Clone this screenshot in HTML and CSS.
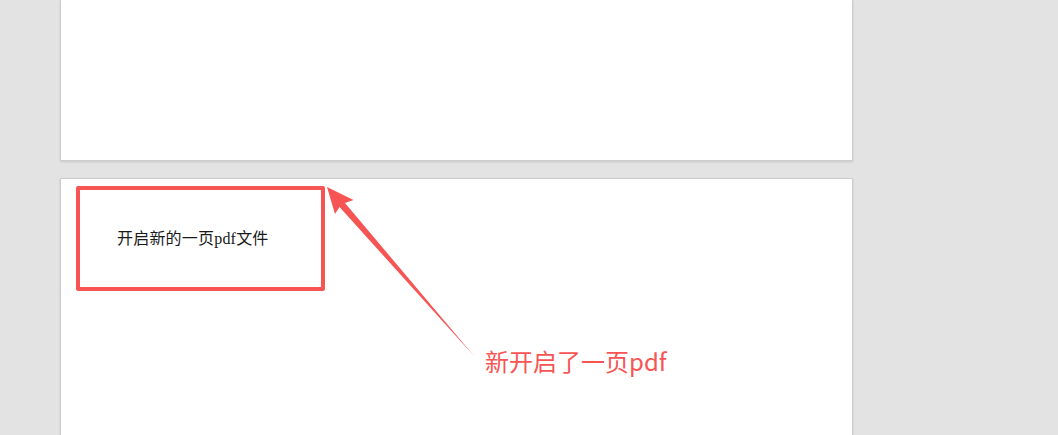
FILE: index.html
```html
<!DOCTYPE html>
<html lang="zh">
<head>
<meta charset="utf-8">
<title>PDF 新页</title>
<link rel="stylesheet" href="styles.css">
</head>
<body>
<div class="stage">
  <div class="pages">
    <div class="page page-first"></div>
    <div class="page page-second">
      <p class="doc-text">开启新的一页pdf文件</p>
    </div>
  </div>
  <div class="mark-box"></div>
  <svg class="arrow" width="1058" height="435" viewBox="0 0 1058 435">
    <polygon points="327,187 353.5,200 345,203 474,356 339.5,207 335,214" fill="#f75454"/>
  </svg>
  <div class="mark-label">新开启了一页pdf</div>
</div>
</body>
</html>
```
FILE: styles.css
```css
html, body {
  margin: 0;
  padding: 0;
  width: 1058px;
  height: 435px;
  overflow: hidden;
  background: #e3e3e3;
}
.stage {
  position: relative;
  width: 1058px;
  height: 435px;
  overflow: hidden;
}
.pages {
  display: flex;
  flex-direction: column;
  gap: 17px;
  padding-left: 60px;
}
.page {
  box-sizing: border-box;
  width: 793px;
  background: #ffffff;
  border: 1px solid #cdcdcd;
  box-shadow: 0 1px 2px rgba(0, 0, 0, 0.12);
}
.page-first {
  height: 161px;
  border-top: none;
}
.page-second {
  height: 400px;
  padding: 50px 0 0 56px;
}
.doc-text {
  margin: 0;
  font-family: "Liberation Serif", "Noto Sans CJK SC", serif;
  font-size: 16px;
  line-height: 20px;
  color: #1a1a1a;
  letter-spacing: 0.2px;
}
.mark-box {
  position: absolute;
  left: 76px;
  top: 186px;
  width: 249px;
  height: 105px;
  box-sizing: border-box;
  border: 4px solid #f75454;
  border-radius: 2px;
}
.arrow {
  position: absolute;
  left: 0;
  top: 0;
}
.mark-label {
  position: absolute;
  left: 485px;
  top: 346px;
  font-family: "Noto Sans CJK SC", "Noto Sans", sans-serif;
  font-size: 24px;
  line-height: 30px;
  color: #f75454;
  white-space: nowrap;
}
```
